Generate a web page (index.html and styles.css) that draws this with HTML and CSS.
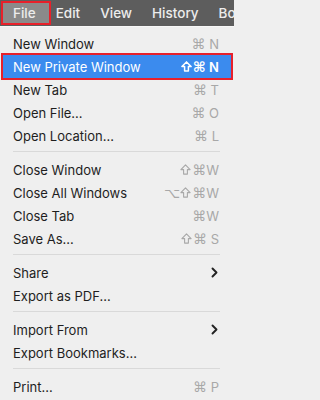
FILE: index.html
```html
<!DOCTYPE html>
<html>
<head>
<meta charset="utf-8">
<link rel="stylesheet" href="styles.css">
</head>
<body>
<div class="menubar">
  <span class="bar-item active">File</span>
  <span class="bar-item">Edit</span>
  <span class="bar-item">View</span>
  <span class="bar-item">History</span>
  <span class="bar-item">Bo</span>
</div>
<div class="menu">
  <div class="row"><span class="label">New Window</span><span class="key"><span class="sym">⌘</span> N</span></div>
  <div class="row selected"><span class="label">New Private Window</span><span class="key"><svg class="shift" width="11" height="11" viewBox="0 0 11 11"><path d="M5.5 0.9 L10.1 5.6 L7.4 5.6 L7.4 10.1 L3.6 10.1 L3.6 5.6 L0.9 5.6 Z" fill="none" stroke="currentColor" stroke-width="1.5" stroke-linejoin="round"/></svg><span class="sym">⌘</span> N</span></div>
  <div class="row"><span class="label">New Tab</span><span class="key"><span class="sym">⌘</span> T</span></div>
  <div class="row"><span class="label">Open File...</span><span class="key"><span class="sym">⌘</span> O</span></div>
  <div class="row"><span class="label">Open Location...</span><span class="key"><span class="sym">⌘</span> L</span></div>
  <div class="sep"></div>
  <div class="row"><span class="label">Close Window</span><span class="key"><svg class="shift" width="11" height="11" viewBox="0 0 11 11"><path d="M5.5 0.9 L10.1 5.6 L7.4 5.6 L7.4 10.1 L3.6 10.1 L3.6 5.6 L0.9 5.6 Z" fill="none" stroke="currentColor" stroke-width="1.1" stroke-linejoin="round"/></svg><span class="sym">⌘</span>W</span></div>
  <div class="row"><span class="label">Close All Windows</span><span class="key"><span class="sym">⌥</span><svg class="shift" width="11" height="11" viewBox="0 0 11 11"><path d="M5.5 0.9 L10.1 5.6 L7.4 5.6 L7.4 10.1 L3.6 10.1 L3.6 5.6 L0.9 5.6 Z" fill="none" stroke="currentColor" stroke-width="1.1" stroke-linejoin="round"/></svg><span class="sym">⌘</span>W</span></div>
  <div class="row"><span class="label">Close Tab</span><span class="key"><span class="sym">⌘</span>W</span></div>
  <div class="row"><span class="label">Save As...</span><span class="key"><svg class="shift" width="11" height="11" viewBox="0 0 11 11"><path d="M5.5 0.9 L10.1 5.6 L7.4 5.6 L7.4 10.1 L3.6 10.1 L3.6 5.6 L0.9 5.6 Z" fill="none" stroke="currentColor" stroke-width="1.1" stroke-linejoin="round"/></svg><span class="sym">⌘</span> S</span></div>
  <div class="sep"></div>
  <div class="row"><span class="label">Share</span><svg class="chev" width="7" height="11" viewBox="0 0 7 11"><polyline points="1.5,1.5 5.5,5.5 1.5,9.5" fill="none" stroke="#222" stroke-width="1.9" stroke-linecap="round" stroke-linejoin="round"/></svg></div>
  <div class="row"><span class="label">Export as PDF...</span></div>
  <div class="sep"></div>
  <div class="row"><span class="label">Import From</span><svg class="chev" width="7" height="11" viewBox="0 0 7 11"><polyline points="1.5,1.5 5.5,5.5 1.5,9.5" fill="none" stroke="#222" stroke-width="1.9" stroke-linecap="round" stroke-linejoin="round"/></svg></div>
  <div class="row"><span class="label">Export Bookmarks...</span></div>
  <div class="sep"></div>
  <div class="row"><span class="label">Print...</span><span class="key"><span class="sym">⌘</span> P</span></div>
</div>
</body>
</html>
```

FILE: styles.css
```css
html, body {
  margin: 0;
  padding: 0;
  background: #efefef;
  overflow: hidden;
}
body {
  width: 234px;
  height: 400px;
  font-family: Inter, "Liberation Sans", sans-serif;
}
.menubar {
  height: 26px;
  background: #5d5d5d;
  display: flex;
  align-items: center;
  white-space: nowrap;
  overflow: hidden;
  padding-left: 2px;
}
.bar-item {
  color: #ececec;
  font-size: 13.5px;
  font-weight: 500;
  padding: 0 10px;
  height: 22px;
  line-height: 22px;
  box-sizing: border-box;
  flex-shrink: 0;
}
.bar-item.active {
  background: #8a8a8a;
  outline: 2px solid #e8202a;
  outline-offset: -1px;
  padding: 0 14px 0 11px;
  margin-right: -4px;
  position: relative;
  z-index: 1;
}
.menu {
  padding-top: 5px;
  border-top: 1px solid #f7f7f7;
}
.row {
  height: 23px;
  display: flex;
  align-items: center;
  justify-content: space-between;
  padding: 0 15px 0 13px;
  font-size: 13px;
  color: #1e1e1e;
}
.row.selected {
  background: #3b8bee;
  color: #ffffff;
  margin: 0 3px;
  padding: 0 12px 0 10px;
  outline: 2px solid #e8202a;
}
.key {
  color: #a8a8a8;
  font-size: 13px;
  white-space: pre;
  display: flex;
  align-items: center;
}
.sym {
  font-family: "DejaVu Sans", sans-serif;
  font-size: 14px;
}
.shift {
  margin-right: 1px;
}
.row.selected .key {
  color: #ffffff;
  font-weight: 600;
}
.chev {
  margin-right: 1px;
}
.sep {
  height: 1px;
  background: #d9d9d9;
  margin: 4px 14px 6px 13px;
}
```
